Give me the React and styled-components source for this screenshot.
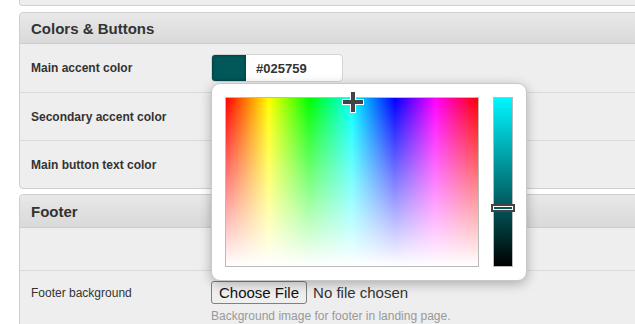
import styled, { createGlobalStyle } from "styled-components";

const GlobalStyle = createGlobalStyle`
  body {
    margin: 0;
    background: #fff;
    font-family: "Liberation Sans", Arial, sans-serif;
    color: #333;
  }
`;

const Page = styled.div`
  width: 635px;
  height: 324px;
  overflow: hidden;
  padding-left: 19px;
  box-sizing: border-box;
`;

const Panel = styled.div`
  width: 640px;
  border: 1px solid #cfcfcf;
  border-radius: 4px;
  background: #eeeeee;
  margin-bottom: 5px;
`;

const TopStub = styled(Panel)`
  height: 25px;
  margin-top: -20px;
  margin-bottom: 6px;
  border-top: none;
`;

const Header = styled.div`
  height: ${(p) => p.$height || 30}px;
  padding-left: 11px;
  display: flex;
  align-items: center;
  font-size: 15px;
  font-weight: bold;
  color: #333;
  background: linear-gradient(#e8e8e8, #d9d9d9);
  border-bottom: 1px solid #cdcdcd;
  border-radius: 4px 4px 0 0;
`;

const Row = styled.div`
  position: relative;
  display: flex;
  align-items: ${(p) => (p.$top ? "flex-start" : "center")};
  height: ${(p) => p.$height || 48}px;
  box-sizing: border-box;
  padding-top: ${(p) => (p.$top ? 10 : 0)}px;
  border-top: ${(p) => (p.$first ? "none" : "1px solid #dadada")};
`;

const Label = styled.div`
  width: 180px;
  padding-left: 11px;
  font-size: 12px;
  font-weight: ${(p) => (p.$normal ? "normal" : "bold")};
  color: #333;
  line-height: ${(p) => (p.$top ? "24px" : "normal")};
`;

const Control = styled.div`
  position: relative;
  display: flex;
  flex-direction: column;
`;

const ColorField = styled.div`
  display: flex;
  align-items: center;
  width: 132px;
  height: 28px;
  box-sizing: border-box;
  background: #fff;
  border: 1px solid #d4d4d4;
  border-radius: 4px;
  overflow: hidden;
`;

const Swatch = styled.div`
  width: 34px;
  height: 100%;
  background: ${(p) => p.$color};
  box-shadow: inset 0 0 2px 1px rgba(0, 0, 0, 0.25);
`;

const HexText = styled.span`
  padding-left: 10px;
  font-size: 13px;
  font-weight: bold;
  color: #333;
`;

const Picker = styled.div`
  position: absolute;
  top: 29px;
  left: 0;
  z-index: 5;
  display: flex;
  gap: 14px;
  padding: 13px;
  background: #fff;
  border: 1px solid #c8c8c8;
  border-radius: 9px;
  box-shadow: 0 3px 12px rgba(0, 0, 0, 0.28);
`;

const Spectrum = styled.div`
  position: relative;
  width: 252px;
  height: 168px;
  border: 1px solid #bbb;
  background: linear-gradient(rgba(255, 255, 255, 0), #fff),
    linear-gradient(
      to right,
      #f00 0%,
      #ff0 17%,
      #0f0 33%,
      #0ff 50%,
      #00f 67%,
      #f0f 83%,
      #f00 100%
    );
`;

const Crosshair = styled.svg`
  position: absolute;
  left: ${(p) => p.$x - 12}px;
  top: ${(p) => p.$y - 12}px;
`;

const ValueBar = styled.div`
  position: relative;
  width: 18px;
  height: 168px;
  border: 1px solid #bbb;
  background: linear-gradient(#00f6ff, #000);
`;

const Handle = styled.div`
  position: absolute;
  left: -3px;
  width: 20px;
  height: 4px;
  border: 2px solid #444;
  outline: 1px solid #fff;
  outline-offset: -3px;
  background: ${(p) => p.$color};
`;

const FileInput = styled.input`
  font-family: "Liberation Sans", Arial, sans-serif;
  font-size: 15px;
  color: #333;
  margin: 0;
  &::file-selector-button {
    font-family: "Liberation Sans", Arial, sans-serif;
    font-size: 15px;
    color: #111;
    background: #efefef;
    border: 1px solid #808080;
    border-radius: 3px;
    padding: 2px 7px;
    margin-right: 6px;
  }
`;

const Help = styled.div`
  margin-top: 5px;
  font-size: 12px;
  color: #999;
`;

const accent = "#025759";

export default function App() {
  return (
    <Page>
      <GlobalStyle />
      <TopStub />
      <Panel>
        <Header>Colors &amp; Buttons</Header>
        <Row $first>
          <Label>Main accent color</Label>
          <Control>
            <ColorField>
              <Swatch $color={accent} />
              <HexText>{accent}</HexText>
            </ColorField>
            <Picker>
              <Spectrum>
                <Crosshair $x={127} $y={4} width="24" height="24" viewBox="0 0 24 24">
                  <path d="M12 1v22M1 12h22" stroke="#fff" strokeWidth="6" />
                  <path d="M12 2v20M2 12h20" stroke="#444" strokeWidth="4" />
                </Crosshair>
              </Spectrum>
              <ValueBar>
                <Handle $color={accent} style={{ top: 106 }} />
              </ValueBar>
            </Picker>
          </Control>
        </Row>
        <Row>
          <Label>Secondary accent color</Label>
        </Row>
        <Row>
          <Label>Main button text color</Label>
        </Row>
      </Panel>
      <Panel>
        <Header $height={32}>Footer</Header>
        <Row $first $height={42} />
        <Row $top $height={60}>
          <Label $normal $top>Footer background</Label>
          <Control>
            <FileInput type="file" />
            <Help>Background image for footer in landing page.</Help>
          </Control>
        </Row>
      </Panel>
    </Page>
  );
}
